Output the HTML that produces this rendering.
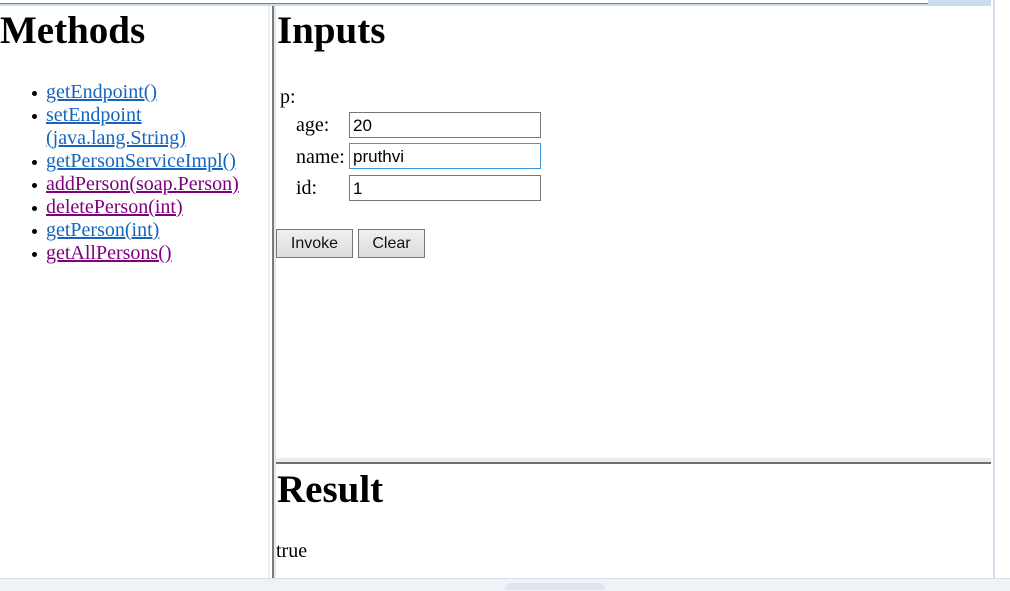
<!DOCTYPE html>
<html><head><style>
html,body{margin:0;padding:0;width:1010px;height:590px;overflow:hidden;background:#fff;font-family:"Liberation Serif",serif;}
.a{position:absolute;}
h1{margin:0;font-size:39px;font-weight:bold;font-family:"Liberation Serif",serif;}
ul{margin:0;padding:0;list-style:none;}
li{font-size:20px;line-height:23px;position:relative;white-space:nowrap;}
li:before{content:"";position:absolute;left:-14px;top:10px;width:5px;height:5px;border-radius:50%;background:#000;}
a{color:#1565c0;text-decoration:underline;}
a.v{color:#800080;}
.lbl{font-size:20px;}
.in{position:absolute;left:349px;border:1px solid #767676;font-family:"Liberation Sans",sans-serif;font-size:17px;line-height:25px;padding-left:3px;box-sizing:border-box;width:192px;height:26px;}
.btn{position:absolute;top:229px;height:29px;border:1px solid #767676;background:linear-gradient(#f0f0f0,#dcdcdc);font-family:"Liberation Sans",sans-serif;font-size:16px;line-height:27px;text-align:center;box-sizing:border-box;color:#111;}
</style></head><body>
<div class="a" style="left:0;top:3px;width:991px;height:1px;background:#808080"></div>
<div class="a" style="left:0;top:4px;width:991px;height:2px;background:#cddbee"></div>
<div class="a" style="left:928px;top:0;width:63px;height:6px;background:#cddbee"></div>
<div class="a" style="left:993px;top:0;width:2px;height:578px;background:#d8dcea"></div>
<div class="a" style="left:0;top:578px;width:1010px;height:12px;background:#f0f2f8;border-top:1px solid #d8dde8"></div>
<div class="a" style="left:505px;top:583px;width:100px;height:7px;background:#dfe5ef;border-radius:6px 6px 0 0"></div>

<div class="a" style="left:268px;top:6px;width:2px;height:572px;background:#efefef"></div>
<div class="a" style="left:272px;top:6px;width:2px;height:572px;background:#7a7a7a"></div>
<div class="a" style="left:274px;top:6px;width:2px;height:572px;background:#e8e8e8"></div>
<div class="a" style="left:276px;top:458px;width:715px;height:4px;background:#ececec"></div>
<div class="a" style="left:276px;top:462px;width:715px;height:2px;background:#707070"></div>

<h1 class="a" style="left:0;top:8px">Methods</h1>
<ul class="a" style="left:46px;top:81px;width:220px">
<li><a href="#">getEndpoint()</a></li>
<li><a href="#">setEndpoint<br>(java.lang.String)</a></li>
<li><a href="#">getPersonServiceImpl()</a></li>
<li><a class="v" href="#">addPerson(soap.Person)</a></li>
<li><a class="v" href="#">deletePerson(int)</a></li>
<li><a href="#">getPerson(int)</a></li>
<li><a class="v" href="#">getAllPersons()</a></li>
</ul>

<h1 class="a" style="left:277px;top:8px">Inputs</h1>
<div class="a lbl" style="left:280px;top:86px">p:</div>
<div class="a lbl" style="left:296px;top:114px">age:</div>
<div class="a lbl" style="left:296px;top:146px">name:</div>
<div class="a lbl" style="left:296px;top:177px">id:</div>
<div class="in" style="top:112px">20</div>
<div class="in" style="top:143px;border-color:#3b9be0">pruthvi</div>
<div class="in" style="top:175px">1</div>
<div class="btn" style="left:276px;width:77px">Invoke</div>
<div class="btn" style="left:358px;width:67px">Clear</div>

<h1 class="a" style="left:277px;top:467px">Result</h1>
<div class="a lbl" style="left:276px;top:540px">true</div>
</body></html>
